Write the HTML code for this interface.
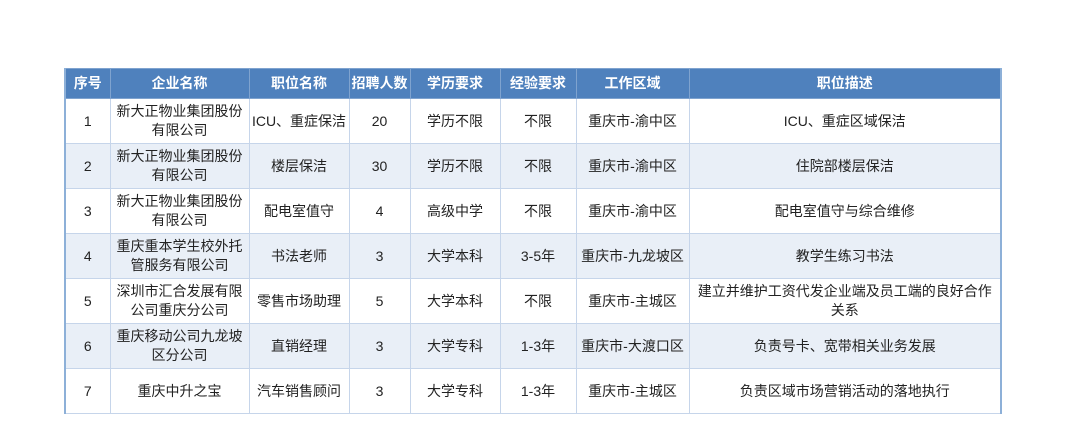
<!DOCTYPE html>
<html><head><meta charset="utf-8"><style>
body{margin:0;width:1080px;height:431px;background:#fff;overflow:hidden;font-family:"Liberation Sans","Noto Sans CJK SC",sans-serif;}
table{position:absolute;left:64px;top:68px;border-collapse:collapse;table-layout:fixed;font-size:14px;color:#222;}
td,th{border:1px solid #c6d5ea;text-align:center;padding:0 2px;line-height:19px;overflow:hidden;}
th{background:#4f81bd;color:#fff;height:29px;font-weight:bold;border-color:#7fa3cf;}
td{height:44px;}
tr.a td{background:#e9eff7;}
table{border-left:2px solid #8db0d8;border-right:2px solid #8db0d8;}
</style></head><body>
<table>
<colgroup><col style="width:45px"><col style="width:139px"><col style="width:100px"><col style="width:61px"><col style="width:90px"><col style="width:76px"><col style="width:113px"><col style="width:312px"></colgroup>
<tr><th>序号</th><th>企业名称</th><th>职位名称</th><th>招聘人数</th><th>学历要求</th><th>经验要求</th><th>工作区域</th><th>职位描述</th></tr>
<tr><td>1</td><td>新大正物业集团股份<br>有限公司</td><td>ICU、重症保洁</td><td>20</td><td>学历不限</td><td>不限</td><td>重庆市-渝中区</td><td>ICU、重症区域保洁</td></tr>
<tr class="a"><td>2</td><td>新大正物业集团股份<br>有限公司</td><td>楼层保洁</td><td>30</td><td>学历不限</td><td>不限</td><td>重庆市-渝中区</td><td>住院部楼层保洁</td></tr>
<tr><td>3</td><td>新大正物业集团股份<br>有限公司</td><td>配电室值守</td><td>4</td><td>高级中学</td><td>不限</td><td>重庆市-渝中区</td><td>配电室值守与综合维修</td></tr>
<tr class="a"><td>4</td><td>重庆重本学生校外托<br>管服务有限公司</td><td>书法老师</td><td>3</td><td>大学本科</td><td>3-5年</td><td>重庆市-九龙坡区</td><td>教学生练习书法</td></tr>
<tr><td>5</td><td>深圳市汇合发展有限<br>公司重庆分公司</td><td>零售市场助理</td><td>5</td><td>大学本科</td><td>不限</td><td>重庆市-主城区</td><td>建立并维护工资代发企业端及员工端的良好合作<br>关系</td></tr>
<tr class="a"><td>6</td><td>重庆移动公司九龙坡<br>区分公司</td><td>直销经理</td><td>3</td><td>大学专科</td><td>1-3年</td><td>重庆市-大渡口区</td><td>负责号卡、宽带相关业务发展</td></tr>
<tr><td>7</td><td>重庆中升之宝</td><td>汽车销售顾问</td><td>3</td><td>大学专科</td><td>1-3年</td><td>重庆市-主城区</td><td>负责区域市场营销活动的落地执行</td></tr>
</table>
</body></html>
